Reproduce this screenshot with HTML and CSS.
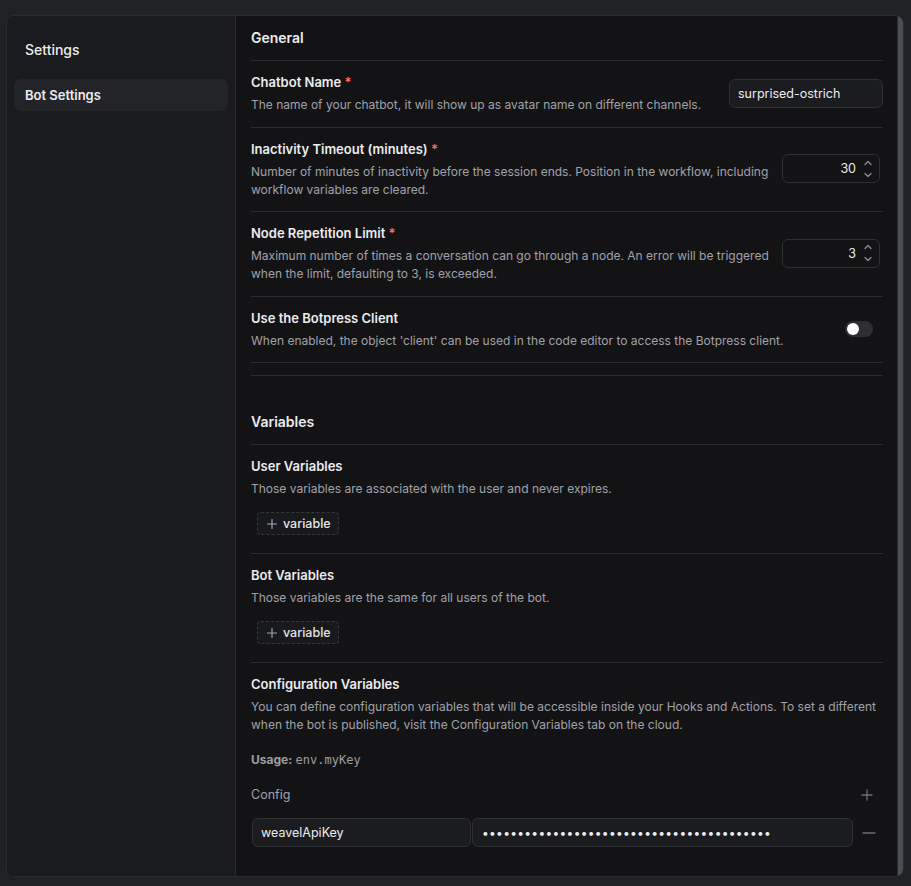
FILE: index.html
```html
<!DOCTYPE html>
<html lang="en">
<head>
<meta charset="utf-8">
<title>Bot Settings</title>
<link rel="stylesheet" href="styles.css">
</head>
<body>
<div class="dialog">
  <aside class="sidebar">
    <div class="side-title">Settings</div>
    <div class="side-item active">Bot Settings</div>
  </aside>
  <main class="main">
    <section class="section">
      <h2 class="section-title">General</h2>
      <div class="row">
        <div class="row-text">
          <div class="label">Chatbot Name <span class="req">*</span></div>
          <div class="desc">The name of your chatbot, it will show up as avatar name on different channels.</div>
        </div>
        <div class="input text-input">surprised-ostrich</div>
      </div>
      <div class="row">
        <div class="row-text">
          <div class="label">Inactivity Timeout (minutes) <span class="req">*</span></div>
          <div class="desc">Number of minutes of inactivity before the session ends. Position in the workflow, including workflow variables are cleared.</div>
        </div>
        <div class="input num-input">
          <span class="num">30</span>
          <svg class="spin" width="10" height="22" viewBox="0 0 10 22" fill="none" stroke="#8a8d93" stroke-width="1.3" stroke-linecap="round" stroke-linejoin="round"><path d="M2 6.5 5 3.5 8 6.5"/><path d="M2 15.5 5 18.5 8 15.5"/></svg>
        </div>
      </div>
      <div class="row">
        <div class="row-text">
          <div class="label">Node Repetition Limit <span class="req">*</span></div>
          <div class="desc">Maximum number of times a conversation can go through a node. An error will be triggered when the limit, defaulting to 3, is exceeded.</div>
        </div>
        <div class="input num-input">
          <span class="num">3</span>
          <svg class="spin" width="10" height="22" viewBox="0 0 10 22" fill="none" stroke="#8a8d93" stroke-width="1.3" stroke-linecap="round" stroke-linejoin="round"><path d="M2 6.5 5 3.5 8 6.5"/><path d="M2 15.5 5 18.5 8 15.5"/></svg>
        </div>
      </div>
      <div class="row">
        <div class="row-text">
          <div class="label">Use the Botpress Client</div>
          <div class="desc">When enabled, the object 'client' can be used in the code editor to access the Botpress client.</div>
        </div>
        <div class="toggle"><span class="knob"></span></div>
      </div>
    </section>

    <section class="section vars">
      <h2 class="section-title">Variables</h2>
      <div class="block">
        <div class="label">User Variables</div>
        <div class="desc">Those variables are associated with the user and never expires.</div>
        <button class="add-btn"><svg width="10" height="10" viewBox="0 0 10 10" stroke="#a3a5aa" stroke-width="1.2" stroke-linecap="round"><path d="M5 0.5v9M0.5 5h9"/></svg>variable</button>
      </div>
      <div class="block">
        <div class="label">Bot Variables</div>
        <div class="desc">Those variables are the same for all users of the bot.</div>
        <button class="add-btn"><svg width="10" height="10" viewBox="0 0 10 10" stroke="#a3a5aa" stroke-width="1.2" stroke-linecap="round"><path d="M5 0.5v9M0.5 5h9"/></svg>variable</button>
      </div>
      <div class="block last">
        <div class="label">Configuration Variables</div>
        <div class="desc">You can define configuration variables that will be accessible inside your Hooks and Actions. To set a different when the bot is published, visit the Configuration Variables tab on the cloud.</div>
        <div class="usage"><b>Usage:</b> <code>env.myKey</code></div>
        <div class="config-head">
          <span>Config</span>
          <svg width="12" height="12" viewBox="0 0 12 12" stroke="#6c6f75" stroke-width="1.3" stroke-linecap="round"><path d="M6 1v10M1 6h10"/></svg>
        </div>
        <div class="config-row">
          <div class="input key-input">weavelApiKey</div>
          <div class="input val-input">•••••••••••••••••••••••••••••••••••••••••</div>
          <svg class="minus" width="14" height="2" viewBox="0 0 14 2" stroke="#6c6f75" stroke-width="1.4" stroke-linecap="round"><path d="M1 1h12"/></svg>
        </div>
      </div>
    </section>
  </main>
  <div class="scrollbar"></div>
</div>
</body>
</html>
```

FILE: styles.css
```css
* { box-sizing: border-box; }
html, body { margin: 0; padding: 0; }
body {
  background: #202124;
  font-family: Inter, "Noto Sans", sans-serif;
  color: #ececee;
  height: 886px;
  overflow: hidden;
}
.dialog {
  margin: 15px 7px 0 6px;
  height: 862px;
  display: flex;
  border: 1px solid #2a2b2f;
  border-radius: 8px;
  overflow: hidden;
  background: #131316;
}
.sidebar {
  width: 229px;
  flex: none;
  background: #1a1b1e;
  border-right: 1px solid #2a2b2f;
  padding: 24px 7px 0 7px;
}
.side-title {
  font-size: 14px;
  font-weight: 500;
  color: #ececee;
  padding-left: 11px;
  line-height: 20px;
}
.side-item {
  margin-top: 19px;
  height: 32px;
  border-radius: 7px;
  padding-left: 11px;
  font-size: 13px;
  font-weight: 600;
  line-height: 32px;
}
.side-item.active { background: #232428; }
.main {
  flex: 1;
  padding: 12px 14px 0 15px;
  overflow: hidden;
}
.section-title {
  margin: 0;
  font-size: 14px;
  font-weight: 600;
  line-height: 20px;
  padding-bottom: 12px;
  border-bottom: 1px solid #2a2b2f;
}
.section { border-bottom: 1px solid #2a2b2f; padding-bottom: 12px; }
.section.vars { border-bottom: none; padding-top: 36px; }
.row {
  display: flex;
  align-items: center;
  justify-content: space-between;
  gap: 10px;
  padding: 11px 0 12.5px;
  border-bottom: 1px solid #2a2b2f;
}
.row-text { flex: 1; }
.label {
  font-size: 13px;
  font-weight: 600;
  line-height: 20px;
  color: #ececee;
}
.req { color: #f27272; }
.desc {
  margin-top: 4px;
  font-size: 12px;
  line-height: 18px;
  color: #a1a2a8;
}
.input {
  background: #1b1c1f;
  border: 1px solid #2e3034;
  border-radius: 6px;
  height: 29px;
  font-size: 12.5px;
  color: #ececee;
  display: flex;
  align-items: center;
}
.text-input {
  width: 154px;
  padding-left: 8px;
  align-self: flex-start;
  margin-top: 7px;
  flex: none;
}
.num-input {
  width: 98px;
  flex: none;
  justify-content: flex-end;
  padding-right: 6px;
  margin-right: 3px;
  background: #131316;
}
.num-input .num { margin-right: 7px; }
.toggle {
  width: 28px;
  height: 16px;
  border-radius: 8px;
  background: #2d2f34;
  margin-right: 10px;
  padding: 2px;
  flex: none;
}
.knob {
  display: block;
  width: 12px;
  height: 12px;
  border-radius: 50%;
  background: #fff;
}
.block {
  padding: 11px 0 18px;
  border-bottom: 1px solid #2a2b2f;
}
.block .desc { margin-top: 4px; }
.block.last { border-bottom: none; }
.add-btn {
  margin: 14px 0 0 6px;
  height: 23px;
  width: 82px;
  display: flex;
  align-items: center;
  gap: 6px;
  padding: 0 0 0 9px;
  background: #18191c;
  border: 1px dashed #35373b;
  border-radius: 4px;
  font-family: inherit;
  font-size: 12.5px;
  font-weight: 500;
  color: #e4e4e7;
}
.usage {
  margin-top: 17px;
  font-size: 12px;
  line-height: 18px;
  color: #9c9ea3;
}
.usage b { font-weight: 700; }
.usage code {
  font-family: "DejaVu Sans Mono", monospace;
  font-size: 12px;
}
.config-head {
  margin-top: 17px;
  display: flex;
  justify-content: space-between;
  align-items: center;
  font-size: 12.5px;
  line-height: 18px;
  color: #a1a2a8;
  padding-right: 10px;
}
.config-row {
  margin-top: 14px;
  display: flex;
  align-items: center;
  gap: 1px;
}
.key-input {
  width: 219px;
  padding-left: 8px;
  flex: none;
  margin-left: 1px;
}
.val-input {
  width: 381px;
  flex: none;
  padding-left: 9px;
  font-size: 12px;
  letter-spacing: 0.3px;
}
.minus { margin-left: 8px; }
.scrollbar {
  width: 6px;
  flex: none;
  background: #4a4e55;
  border-left: 1px solid #2a2b2f;
}
```
